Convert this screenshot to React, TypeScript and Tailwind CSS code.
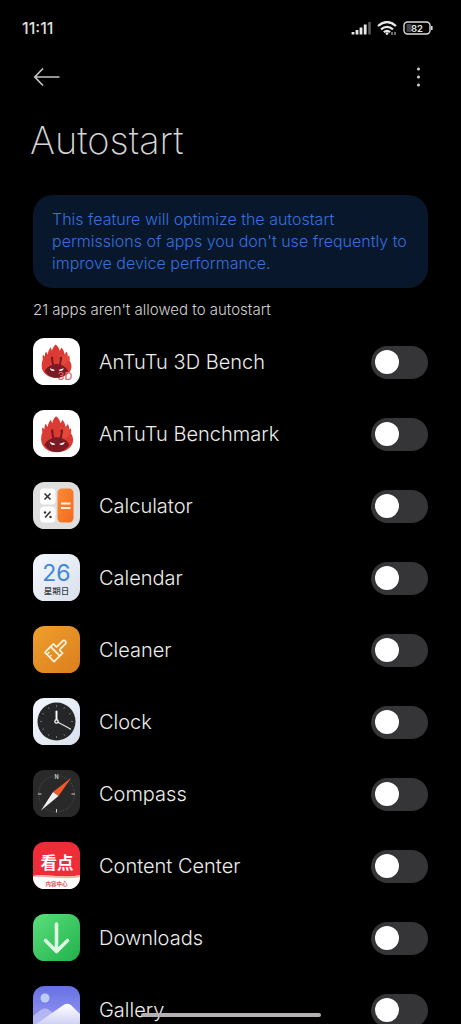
import { useState, type ReactNode } from "react";

function Flame() {
  return (
    <>
      <path
        d="M23.500 6.800c2.400 1.500 4 3.900 4.400 6.900.9-1 1.500-2.100 1.800-3.500 2 1.900 3.100 4.400 3.300 7.300l2.400-3c1 1.900 1.300 3.800 1.200 5.600l1.800-1.300c.4 1.900.4 3.500 0 5 1.400 2 2.200 4.200 2.200 6.800C40.600 37.600 33.500 42.800 24.500 42.800S8.600 37.600 8.600 29.700c0-2.500.4-4.700 1.300-6.800-.5-1.700-.5-3.300-.1-4.900l2.200 1.800c-.1-2 .2-3.800 1-5.500l2.300 3.200c.1-2.900 1.200-5.500 3.200-7.600.1 1.500.5 2.800 1.200 3.800.4-2.700 1.700-5 3.800-6.900z"
        fill="#dc3b34"
      />
      <path d="M26 12c3 5 2 9 0 14l7 3 6-6-5-6-4 3z" fill="#e85240" opacity="0.600" />
      <path
        d="M18.500 20h2.500v3.700l.8 4.300q2.700-.3 5.400 0l.8-4.300V20h2.500v2.500l-1.400 6.300c4.100 1.300 6.500 3.500 7.800 6.500-2.900 4.600-7 7.300-12.400 7.300s-9.900-2.700-12.500-7.300c1.200-3 3.800-5.200 7.800-6.500L18.500 22.500z"
        fill="#7a1a22"
      />
      <path d="M17.300 32.500l5.600 1.900c-1.600 1.700-4.800 1.300-5.600-1.900zM32.300 32.500l-5.600 1.900c1.600 1.700 4.800 1.300 5.600-1.900z" fill="#fff" />
    </>
  );
}

function Icon({ id, children }: { id: string; children: ReactNode }) {
  return (
    <svg viewBox="0 0 48 48" className="size-12 shrink-0" aria-hidden="true">
      <defs>
        <clipPath id={`clip-${id}`}>
          <rect x="0" y="0" width="47" height="47" rx="11.500" />
        </clipPath>
        <linearGradient id="pale" x1="0" y1="0" x2="1" y2="1">
          <stop offset="0" stopColor="#f5f8ff" />
          <stop offset="1" stopColor="#d9e0ec" />
        </linearGradient>
        <linearGradient id="amber" x1="0" y1="0" x2="1" y2="1">
          <stop offset="0" stopColor="#eda02b" />
          <stop offset="1" stopColor="#dc7d1f" />
        </linearGradient>
        <linearGradient id="orange" x1="0" y1="0" x2="1" y2="1">
          <stop offset="0" stopColor="#fb8b37" />
          <stop offset="1" stopColor="#f36a1f" />
        </linearGradient>
        <linearGradient id="green" x1="0" y1="0" x2="1" y2="1">
          <stop offset="0" stopColor="#5be07c" />
          <stop offset="1" stopColor="#1fb04a" />
        </linearGradient>
        <linearGradient id="violet" x1="0" y1="0" x2="0" y2="1">
          <stop offset="0" stopColor="#6470e4" />
          <stop offset="1" stopColor="#a7a2f5" />
        </linearGradient>
        <linearGradient id="snow" x1="0" y1="0" x2="0" y2="1">
          <stop offset="0" stopColor="#ffffff" />
          <stop offset="1" stopColor="#bcbdf2" />
        </linearGradient>
      </defs>
      <g clipPath={`url(#clip-${id})`}>
        <g transform="translate(-0.500 -0.500)">{children}</g>
      </g>
    </svg>
  );
}

const CJK = '"Noto Sans CJK SC", sans-serif';
const SANS = 'Inter, sans-serif';

function ticks(count: number, from: number, to: number) {
  return Array.from({ length: count }, (_, i) => {
    const a = (i * 2 * Math.PI) / count;
    return `M${24 + from * Math.sin(a)} ${24 - from * Math.cos(a)}L${24 + to * Math.sin(a)} ${24 - to * Math.cos(a)}`;
  }).join("");
}

const apps: { name: string; art: ReactNode }[] = [
  {
    name: "AnTuTu 3D Bench",
    art: (
      <>
        <rect width="49" height="48" fill="#fff" />
        <g transform="translate(1.200 0.600) scale(0.930)">
          <Flame />
        </g>
        <text x="25" y="42" fontSize="11" fontWeight="500" fontFamily={SANS} fill="#dd6464">3D</text>
      </>
    ),
  },
  {
    name: "AnTuTu Benchmark",
    art: (
      <>
        <rect width="49" height="48" fill="#fff" />
        <Flame />
      </>
    ),
  },
  {
    name: "Calculator",
    art: (
      <>
        <rect width="49" height="48" fill="#dedede" />
        <rect x="7.500" y="7" width="15.500" height="16" rx="4" fill="#fff" />
        <rect x="7.500" y="25" width="15.500" height="16" rx="4" fill="#fff" />
        <rect x="25" y="7" width="16" height="34" rx="4.500" fill="url(#orange)" />
        <path d="M12 12l6 6M18 12l-6 6M12.500 36l5.500-6" stroke="#333" strokeWidth="1.600" />
        <circle cx="12.500" cy="31" r="1.200" fill="#333" />
        <circle cx="18" cy="35.500" r="1.200" fill="#333" />
        <path d="M28.500 22h9.500M28.500 26.500h9.500" stroke="#fff3df" strokeWidth="2" />
      </>
    ),
  },
  {
    name: "Calendar",
    art: (
      <>
        <rect width="49" height="48" fill="url(#pale)" />
        <text x="24" y="27" textAnchor="middle" fontSize="23" fontFamily={SANS} fill="#3f86dd">26</text>
        <text x="24" y="40" textAnchor="middle" fontSize="8.500" fontWeight="500" fontFamily={CJK} fill="#3a3f48">星期日</text>
      </>
    ),
  },
  {
    name: "Cleaner",
    art: (
      <>
        <rect width="49" height="48" fill="url(#amber)" />
        <g transform="translate(23 25.500) rotate(45)" fill="none" stroke="#fff0d6" strokeWidth="1.800" strokeLinejoin="round">
          <path d="M-6.500 -3.500h3.500a1 1 0 0 0 1-1V-12a2 2 0 0 1 4 0v7.500a1 1 0 0 0 1 1h3.500V8.500h-13z" />
          <path d="M-6.500 0.500h13" />
          <path d="M-3.500 8.500V5M0 8.500V5.500" strokeWidth="1.300" />
        </g>
      </>
    ),
  },
  {
    name: "Clock",
    art: (
      <>
        <rect width="49" height="48" fill="url(#pale)" />
        <circle cx="24" cy="24" r="19" fill="#252628" />
        <path d={ticks(12, 14.5, 16.500)} stroke="#777a7e" strokeWidth="0.900" />
        <path d="M24 23V14" stroke="#fff" strokeWidth="1.900" strokeLinecap="round" />
        <path d="M25 24.500l13 7" stroke="#e3e3e3" strokeWidth="1.200" strokeLinecap="round" />
        <circle cx="24" cy="24" r="1.700" fill="#252628" stroke="#fff" strokeWidth="1.200" />
      </>
    ),
  },
  {
    name: "Compass",
    art: (
      <>
        <rect width="49" height="48" fill="#292929" />
        <circle cx="24" cy="24.500" r="18" fill="none" stroke="#4d4d4d" strokeWidth="1.500" strokeDasharray="0.700 1.600" />
        <path d="M5.500 24.500H9M39 24.500h3.500M24 39.500V43" stroke="#d0d0d0" strokeWidth="1" />
        <text x="24" y="9" textAnchor="middle" fontSize="5.500" fontWeight="600" fontFamily={SANS} fill="#ccc">N</text>
        <path d="M39 8L20.500 22.500l5.500 4z" fill="#f15a28" />
        <path d="M8.500 41L20.500 22.500l5.500 4z" fill="#f1f1f1" />
      </>
    ),
  },
  {
    name: "Content Center",
    art: (
      <>
        <rect width="49" height="48" fill="#ee2d39" />
        <path d="M0 34.500c12-2.500 30 3 49-1V48H0z" fill="#fff" />
        <path d="M0 34.500c12-2.500 30 3 49-1v2c-18 3.500-37-1.500-49 0z" fill="#fbb2a0" />
        <text x="24.500" y="27" textAnchor="middle" fontSize="16.500" fontWeight="700" fontFamily={CJK} fill="#fff">看点</text>
        <text x="24" y="44" textAnchor="middle" fontSize="5.500" fontWeight="700" fontFamily={CJK} fill="#dc5558">内容中心</text>
      </>
    ),
  },
  {
    name: "Downloads",
    art: (
      <>
        <rect width="49" height="48" fill="url(#green)" />
        <path d="M24 10.500v27M13 27l11 11 11-11" fill="none" stroke="#dcfbe2" strokeWidth="3.600" strokeLinecap="round" strokeLinejoin="round" />
      </>
    ),
  },
  {
    name: "Gallery",
    art: (
      <>
        <rect width="49" height="48" fill="url(#violet)" />
        <circle cx="12.500" cy="12.500" r="4.500" fill="#bccdfb" />
        <path d="M0 31l9-7q3.500-2 7 0l16 12v12H0z" fill="#b5b6f4" />
        <path d="M6 37l25-17.500q4.500-2.500 8 .5l10 10v18H0v-7z" fill="url(#snow)" />
      </>
    ),
  },
];

function AppRow({ name, art }: { name: string; art: ReactNode }) {
  const [on, setOn] = useState(false);
  return (
    <li>
      <label className="flex h-[72px] items-center">
        <Icon id={name.replace(/\s/g, "")}>{art}</Icon>
        <span className="ml-[18px] flex-1 text-[20px] leading-7 font-light text-[#ececec]">{name}</span>
        <input
          type="checkbox"
          role="switch"
          checked={on}
          onChange={(e) => setOn(e.target.checked)}
          className="flex h-[33px] w-[57px] shrink-0 appearance-none items-center rounded-full bg-[#353537] px-1 before:size-6 before:rounded-full before:bg-white before:content-[''] checked:justify-end checked:bg-[#2f6fe4]"
        />
      </label>
    </li>
  );
}

export default function App() {
  return (
    <div className="relative flex h-screen flex-col overflow-hidden bg-black font-[Inter,'Noto_Sans_CJK_SC',sans-serif] text-[#dedede]">
      <div className="flex h-[55px] shrink-0 items-center justify-between pr-7 pl-[22px]">
        <time className="text-[16px] leading-6 font-medium">11:11</time>
        <div className="flex items-center gap-[6px]">
          <svg viewBox="0 0 20 14" className="h-[14px] w-5" aria-label="Signal">
            <path d="M2 13.500v-2.500M6 13.500V9M10 13.500V6.500M14.200 13.500V3.500" stroke="#e8e8e8" strokeWidth="2.800" />
            <path d="M18.500 13.500V1" stroke="#5b5b5b" strokeWidth="2.600" />
          </svg>
          <svg viewBox="0 0 20 14" className="h-[14px] w-5" aria-label="Wi-Fi">
            <path d="M1 5q9-8 18 0M4 8.300q6-5 12 0M6.800 11.200q3.200-2.500 6.400 0" fill="none" stroke="#e8e8e8" strokeWidth="2.200" />
            <circle cx="10" cy="12.600" r="1.400" fill="#e8e8e8" />
            <path d="M15 11v3M18 11v3" stroke="#9a9a9a" strokeWidth="1.400" />
          </svg>
          <svg viewBox="0 0 30 14" className="h-[14px] w-[30px]" aria-label="Battery">
            <rect x="1" y="1" width="26" height="12" rx="3.500" fill="none" stroke="#dcdcdc" strokeWidth="1.400" />
            <rect x="3.500" y="3" width="5" height="8" rx="1" fill="#444" />
            <path d="M28.800 5v4" stroke="#dcdcdc" strokeWidth="1.600" />
            <text x="14" y="10.500" textAnchor="middle" fontSize="9.500" fontWeight="600" fontFamily={SANS} fill="#e8e8e8">82</text>
          </svg>
        </div>
      </div>

      <header className="shrink-0 px-[30px]">
        <div className="flex h-11 items-center justify-between px-[3px]">
          <button type="button" aria-label="Back">
            <svg viewBox="0 0 28 20" className="h-5 w-7" fill="none" stroke="#c4c4c4" strokeWidth="1.700">
              <path d="M26.500 10H2M10 1.500L1.800 10l8.200 8.500" />
            </svg>
          </button>
          <button type="button" aria-label="More options">
            <svg viewBox="0 0 20 20" className="size-5" fill="#d0d0d0">
              <circle cx="10.500" cy="2" r="1.500" />
              <circle cx="10.500" cy="10" r="1.500" />
              <circle cx="10.500" cy="18" r="1.500" />
            </svg>
          </button>
        </div>
        <h1 className="mt-4 text-[38px] leading-[50px] font-extralight text-[#d4d4d4]">Autostart</h1>
      </header>

      <main className="min-h-0 flex-1 overflow-hidden px-[33px] pt-[30px]">
        <p className="rounded-[20px] bg-[#08172c] pt-[13px] pr-3 pb-[14px] pl-[19px] text-[16px] leading-[22px] font-light text-[#3570dc]">
          This feature will optimize the autostart permissions of apps you don't use frequently to improve device performance.
        </p>
        <h2 className="mt-3 text-[15px] leading-5 font-light text-[#d2d2d2]">21 apps aren't allowed to autostart</h2>
        <ul className="mt-[6px]">
          {apps.map((app) => (
            <AppRow key={app.name} {...app} />
          ))}
        </ul>
      </main>

      <div className="absolute bottom-[7px] left-1/2 h-1 w-[180px] -translate-x-1/2 rounded-full bg-[#b4b0b4]" />
    </div>
  );
}
